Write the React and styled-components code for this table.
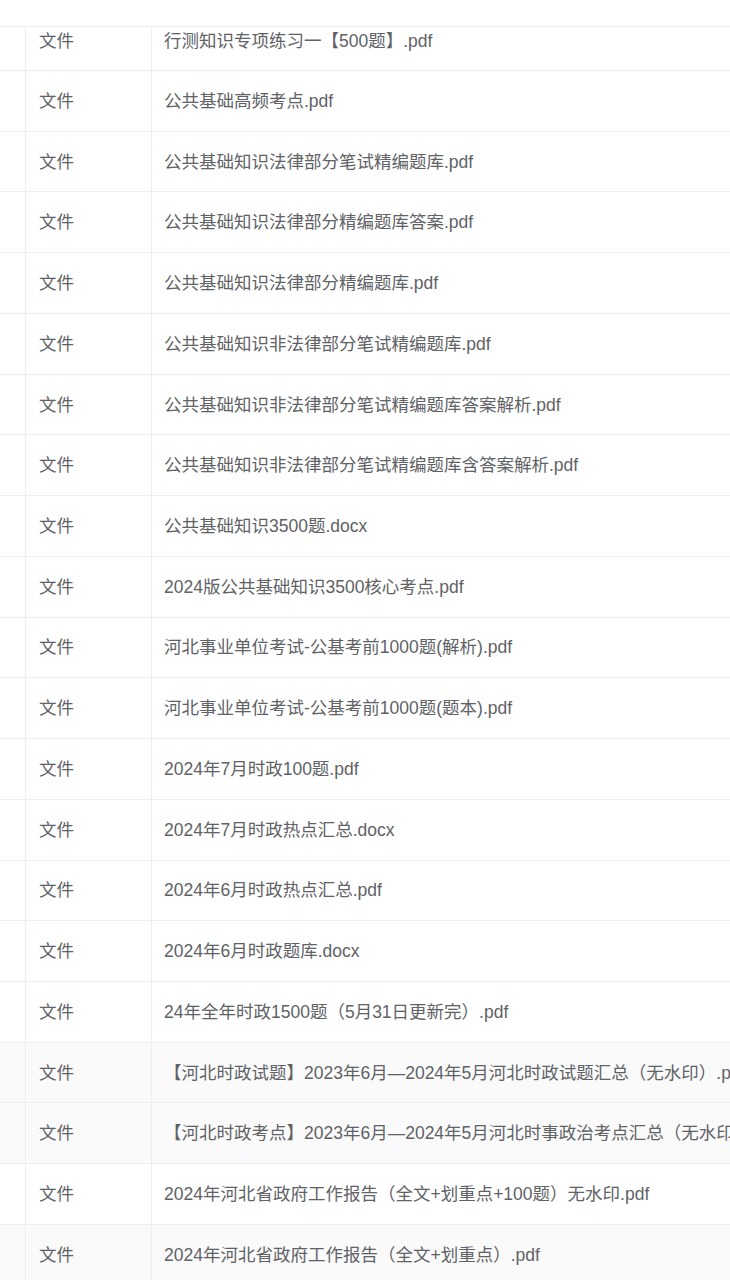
import React from "react";
import styled, { createGlobalStyle } from "styled-components";

const Global = createGlobalStyle`
  html, body {
    margin: 0;
    padding: 0;
    background: #ffffff;
    overflow: hidden;
  }
  body {
    font-family: "Liberation Sans", "Noto Sans CJK SC", sans-serif;
  }
`;

const Page = styled.div`
  width: 730px;
  height: 1280px;
  overflow: hidden;
  background: #ffffff;
  padding-top: 26px;
  box-sizing: border-box;
`;

const Table = styled.div`
  width: 900px;
  border-top: 1px solid #ebeef5;
  display: flex;
  flex-direction: column;
`;

const Row = styled.div`
  display: grid;
  grid-template-columns: 26px 126px 1fr;
  height: ${(p) => p.$h}px;
  box-sizing: border-box;
  border-bottom: 1px solid #ebeef5;
  background: ${(p) => (p.$shade ? "#fafafa" : "#ffffff")};
`;

const Cell = styled.div`
  display: flex;
  align-items: ${(p) => (p.$top ? "flex-start" : "center")};
  padding: ${(p) => (p.$top ? "2px" : "0")} 12px 0 12px;
  box-sizing: border-box;
  border-right: ${(p) => (p.$last ? "none" : "1px solid #ebeef5")};
  color: #606266;
  font-size: 17.5px;
  line-height: 24px;
  white-space: nowrap;
  overflow: visible;
`;

const TypeCell = styled(Cell)`
  padding-left: 13px;
`;

const NameCell = styled(Cell)`
  padding-left: 12px;
`;

const files = [
  "行测知识专项练习一【500题】.pdf",
  "公共基础高频考点.pdf",
  "公共基础知识法律部分笔试精编题库.pdf",
  "公共基础知识法律部分精编题库答案.pdf",
  "公共基础知识法律部分精编题库.pdf",
  "公共基础知识非法律部分笔试精编题库.pdf",
  "公共基础知识非法律部分笔试精编题库答案解析.pdf",
  "公共基础知识非法律部分笔试精编题库含答案解析.pdf",
  "公共基础知识3500题.docx",
  "2024版公共基础知识3500核心考点.pdf",
  "河北事业单位考试-公基考前1000题(解析).pdf",
  "河北事业单位考试-公基考前1000题(题本).pdf",
  "2024年7月时政100题.pdf",
  "2024年7月时政热点汇总.docx",
  "2024年6月时政热点汇总.pdf",
  "2024年6月时政题库.docx",
  "24年全年时政1500题（5月31日更新完）.pdf",
  "【河北时政试题】2023年6月—2024年5月河北时政试题汇总（无水印）.pdf",
  "【河北时政考点】2023年6月—2024年5月河北时事政治考点汇总（无水印）.pdf",
  "2024年河北省政府工作报告（全文+划重点+100题）无水印.pdf",
  "2024年河北省政府工作报告（全文+划重点）.pdf",
];

const shaded = new Set([17, 18, 20]);

export default function App() {
  return (
    <>
      <Global />
      <Page>
        <Table>
          {files.map((name, i) => {
            const first = i === 0;
            const h = first ? 44 : 60.74;
            return (
              <Row key={i} $h={h} $shade={shaded.has(i)}>
                <Cell $top={first} />
                <TypeCell $top={first}>文件</TypeCell>
                <NameCell $top={first} $last>
                  {name}
                </NameCell>
              </Row>
            );
          })}
        </Table>
      </Page>
    </>
  );
}
